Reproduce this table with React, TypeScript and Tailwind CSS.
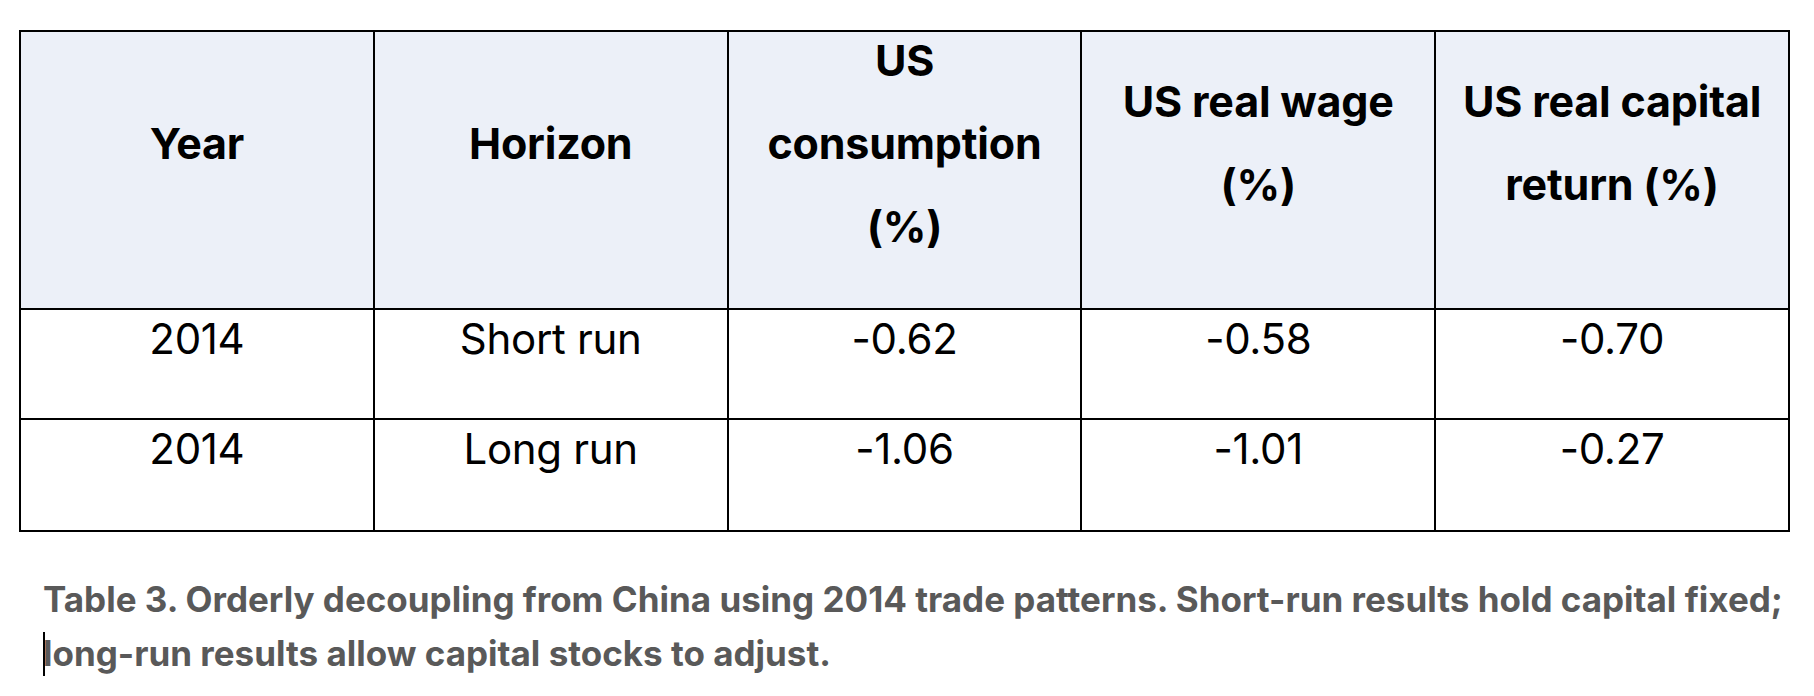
import React from "react";

const headers: string[][] = [
  ["Year"],
  ["Horizon"],
  ["US", "consumption", "(%)"],
  ["US real wage", "(%)"],
  ["US real capital", "return (%)"],
];

const rows: string[][] = [
  ["2014", "Short run", "-0.62", "-0.58", "-0.70"],
  ["2014", "Long run", "-1.06", "-1.01", "-0.27"],
];

export default function App() {
  return (
    <div className="w-[1814px] h-[696px] bg-white text-black" style={{ fontFamily: "Inter, 'Noto Sans', sans-serif" }}>
      <div className="pt-[30px] pl-[19px]">
        <table className="w-[1771px] border-collapse table-fixed">
          <tbody>
            <tr className="h-[278px]">
              {headers.map((h, i) => (
                <td key={i} className="border-2 border-black bg-[#ecf0f8] p-0 align-middle">
                  <div className="h-[276px] flex flex-col items-center justify-center pb-[54px]">
                    {h.map((line, j) => (
                      <div key={j} className="text-[43px] font-bold leading-[83px] whitespace-nowrap tracking-[-0.2px]">
                        {line}
                      </div>
                    ))}
                  </div>
                </td>
              ))}
            </tr>
            {rows.map((r, i) => (
              <tr key={i} className={i === 0 ? "h-[110px]" : "h-[112px]"}>
                {r.map((c, j) => (
                  <td key={j} className="border-2 border-black p-0 align-top text-center">
                    <div className="text-[42px] leading-[58px] tracking-[-0.3px]">{c}</div>
                  </td>
                ))}
              </tr>
            ))}
          </tbody>
        </table>
      </div>
      <div className="pl-[43px] pt-[40px] text-[35px] font-bold leading-[54px] text-[#595959]">
        <div className="whitespace-nowrap">Table 3. Orderly decoupling from China using 2014 trade patterns. Short-run results hold capital fixed;</div>
        <div className="relative whitespace-nowrap">
          <span className="absolute left-0 top-[6px] h-[44px] w-[2px] bg-black" />
          long-run results allow capital stocks to adjust.
        </div>
      </div>
    </div>
  );
}
